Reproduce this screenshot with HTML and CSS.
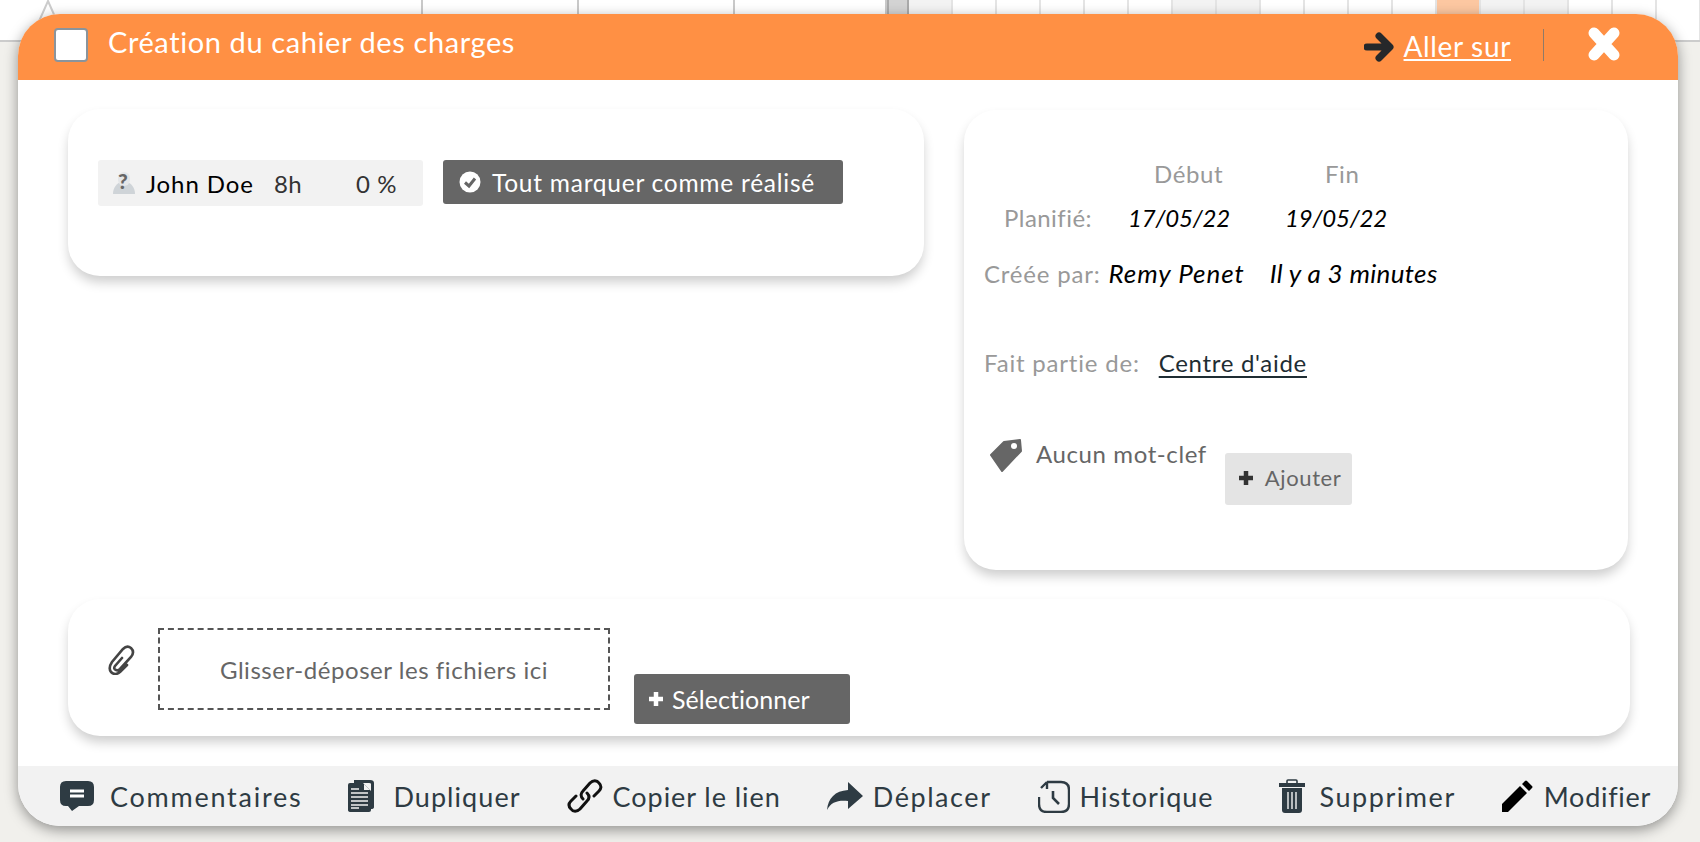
FILE: index.html
```html
<!DOCTYPE html>
<html lang="fr">
<head>
<meta charset="utf-8">
<title>Création du cahier des charges</title>
<link rel="stylesheet" href="styles.css">
</head>
<body>
<div class="gantt">
  <div class="cell c-a"><svg class="milestone" width="30" height="30" viewBox="0 0 30 30"><path d="M15 1 27 28H3Z" fill="#fff" stroke="#ccc" stroke-width="2"/></svg></div>
  <div class="cell c-b"></div><div class="cell c-b"></div><div class="cell c-c"></div>
  <div class="cell c-grey"></div>
  <div class="cell c-d shade"></div>
  <div class="cell c-d"></div><div class="cell c-d"></div><div class="cell c-d"></div><div class="cell c-d"></div><div class="cell c-d"></div>
  <div class="cell c-d shade"></div><div class="cell c-d shade"></div>
  <div class="cell c-d"></div><div class="cell c-d"></div><div class="cell c-d"></div><div class="cell c-d"></div>
  <div class="cell c-d orange"></div>
  <div class="cell c-d shade"></div><div class="cell c-d shade"></div>
  <div class="cell c-d"></div><div class="cell c-d"></div><div class="cell c-d"></div>
</div>

<div class="modal">
  <header class="head">
    <span class="check"></span>
    <span class="title">Création du cahier des charges</span>
    <svg class="go-icon" width="30" height="32" viewBox="0 0 30 32"><path d="M3 16H24M15 5 26 16 15 27" fill="none" stroke="#26282a" stroke-width="7" stroke-linejoin="round" stroke-linecap="round"/></svg>
    <a class="go-link">Aller sur</a>
    <span class="sep"></span>
    <svg class="close" width="34" height="34" viewBox="0 0 34 34"><path d="M7 6 27 28M27 6 7 28" fill="none" stroke="#fff" stroke-width="11" stroke-linecap="round"/></svg>
  </header>

  <div class="top">
    <section class="card left">
      <div class="chip">
        <svg class="avatar" width="22" height="24" viewBox="0 0 22 24"><path d="M0 23C0 16 4 13 7 11H15C18 13 22 16 22 23Z" fill="#cfd4d8"/><rect x="5" y="1" width="12" height="14" rx="6" fill="#e4e6e8"/></svg>
        <span class="q">?</span>
        <span class="name">John Doe</span>
        <span class="hours">8h</span>
        <span class="pct">0 %</span>
      </div>
      <button class="btn-dark mark">
        <svg width="22" height="24" viewBox="0 0 22 24"><circle cx="11" cy="12" r="10.5" fill="#fff"/><path d="M6 12.5 10 16 16 8.5" fill="none" stroke="#666" stroke-width="3"/></svg>
        <span>Tout marquer comme réalisé</span>
      </button>
    </section>

    <section class="card right">
      <div class="dates">
        <span></span><span class="lbl th-start">Début</span><span class="lbl th-end">Fin</span>
        <span class="lbl planned">Planifié:</span><em>17/05/22</em><em>19/05/22</em>
      </div>
      <div class="line created"><span class="lbl">Créée par:</span><em class="who">Remy Penet</em><em class="when">Il y a 3 minutes</em></div>
      <div class="line part"><span class="lbl">Fait partie de:</span><a class="parent">Centre d'aide</a></div>
      <div class="tags">
        <svg class="tag" width="33" height="34" viewBox="0 0 33 34"><path d="M1 16 14 3 30 1 31 12 12 32Z" fill="#666" stroke="#666" stroke-linejoin="round" stroke-width="2"/><circle cx="24" cy="7" r="3" fill="#fff"/></svg>
        <span class="nokw">Aucun mot-clef</span>
        <button class="btn-light">
          <svg width="16" height="16" viewBox="0 0 16 16"><path d="M8 1V15M1 8H15" stroke="#333" stroke-width="4.5"/></svg>
          <span>Ajouter</span>
        </button>
      </div>
    </section>
  </div>

  <section class="card files">
    <svg class="clip" width="28" height="30" viewBox="0 0 28 30"><path d="M14 13 7 21Q5 24 8 25 10 26 12 24L23 12Q27 7 23 3 19 0 15 4L4 17Q0 23 3 27 7 31 12 27L19 20" fill="none" stroke="#444" stroke-width="2.6" stroke-linecap="round"/></svg>
    <div class="drop">Glisser-déposer les fichiers ici</div>
    <button class="btn-dark pick">
      <svg width="16" height="16" viewBox="0 0 16 16"><path d="M8 1V15M1 8H15" stroke="#fff" stroke-width="4.5"/></svg>
      <span>Sélectionner</span>
    </button>
  </section>

  <footer class="foot">
    <div class="act a-com">
      <svg width="36" height="32" viewBox="0 0 36 32"><path d="M7 1H29Q35 1 35 7V20Q35 26 29 26H20L13 31 9 26H7Q1 26 1 20V7Q1 1 7 1Z" fill="#2e3b43"/><path d="M11 11H25M11 16H25" stroke="#fff" stroke-width="3"/></svg>
      <span>Commentaires</span>
    </div>
    <div class="act a-dup">
      <svg width="26" height="34" viewBox="0 0 26 34"><path d="M6 1H22Q26 1 26 4V28Q26 30 23 30V5Q23 4 21 4H6Z" fill="#2e3b43"/><path d="M2 4H15L23 12V31Q23 33 21 33H3Q0 33 0 31V6Q0 4 2 4Z" fill="#2e3b43"/><path d="M16 5 22 11H16Z" fill="#f2f2f2"/><path d="M3 10H11M3 14H20M3 18H20M3 22H20M3 26H20M3 29H11" stroke="#f2f2f2" stroke-width="1.6"/></svg>
      <span>Dupliquer</span>
    </div>
    <div class="act a-link">
      <svg width="36" height="36" viewBox="0 0 36 36"><path d="M16 21C13 18 14 15 16 13L23 5C26 2 30 2 32 5C35 8 34 11 32 13L27 18M20 15C23 18 22 21 20 23L13 31C10 34 6 34 4 31C1 28 2 25 4 23L9 18" fill="none" stroke="#111" stroke-width="3" stroke-linecap="round"/></svg>
      <span>Copier le lien</span>
    </div>
    <div class="act a-move">
      <svg width="36" height="28" viewBox="0 0 36 28"><path d="M0 28C1 16 8 9 21 8V0L36 14 21 27V19C11 18 4 20 0 28Z" fill="#2e3b43"/></svg>
      <span>Déplacer</span>
    </div>
    <div class="act a-hist">
      <svg width="32" height="33" viewBox="0 0 32 33"><path d="M9 2H23Q31 2 31 10V24Q31 32 23 32H9Q1 32 1 24V17M3 8 9 2M9 2V9" fill="none" stroke="#2e3b43" stroke-width="2.4"/><path d="M15 11V18L21 24" fill="none" stroke="#2e3b43" stroke-width="2.6"/></svg>
      <span>Historique</span>
    </div>
    <div class="act a-del">
      <svg width="26" height="34" viewBox="0 0 26 34"><path d="M8 4V2Q8 1 9 1H17Q18 1 18 2V4" fill="none" stroke="#2e3b43" stroke-width="1.6"/><path d="M0 4H26V8H0Z" fill="#2e3b43"/><path d="M3 9H23V31Q23 34 20 34H6Q3 34 3 31Z" fill="#2e3b43"/><path d="M9 13V30M13 13V30M17 13V30" stroke="#f2f2f2" stroke-width="1.4"/></svg>
      <span>Supprimer</span>
    </div>
    <div class="act a-edit">
      <svg width="31" height="32" viewBox="0 0 31 32"><path d="M0 32V24L18 6 25 13 7 31 6 32ZM20 4 23 1Q24 0 25 1L30 6Q31 7 30 8L27 11Z" fill="#000"/></svg>
      <span>Modifier</span>
    </div>
  </footer>
</div>
</body>
</html>
```

FILE: styles.css
```css
* { box-sizing: border-box; }
html, body { margin: 0; height: 842px; overflow: hidden; }
body {
  background: #f1f0ec;
  font-family: "Lato", "Open Sans", sans-serif;
  position: relative;
}
.gantt {
  display: flex;
  height: 42px;
  background: #fff;
  border-bottom: 2px solid #ccc;
}
.cell { height: 100%; border-right: 2px solid #e4e4e4; flex: none; }
.c-a { width: 423px; border-color: #c9c9c9; padding-left: 33px; }
.c-b { width: 156px; border-color: #c9c9c9; }
.c-c { width: 152px; border-color: #c9c9c9; }
.c-grey { width: 22px; background: #d3d3d3; border-left: 2px solid #aaa; border-right-color: #aaa; }
.c-d { width: 44px; }
.shade { background: #f3f3f3; }
.orange { background: #fcc7a1; }
.milestone { display: block; }

.modal {
  position: absolute;
  left: 18px;
  top: 14px;
  width: 1660px;
  height: 812px;
  background: #fff;
  border-radius: 42px;
  overflow: hidden;
  display: flex;
  flex-direction: column;
  box-shadow: 0 4px 14px rgba(0, 0, 0, .4);
}
.head {
  height: 66px;
  flex: none;
  background: #ff9044;
  display: flex;
  align-items: center;
  padding: 0 57px 0 36px;
  color: #fff;
}
.check {
  width: 34px;
  height: 34px;
  background: #fff;
  border: 2px solid #8a949c;
  border-radius: 4px;
  margin: -4px 20px 0 0;
}
.title { font-size: 29px; letter-spacing: .6px; flex: 1; margin-top: -11px; }
.go-icon { margin: 0 10px 0 0; }
.go-link { font-size: 28px; letter-spacing: .65px; text-decoration: underline; text-underline-offset: 2px; margin: -3px 32px 0 0; }
.sep { width: 1px; height: 32px; background: #8f7a68; margin: -4px 43px 0 0; }
.close { margin-top: -6px; }

.top { display: flex; align-items: flex-start; padding: 29px 0 0 50px; gap: 40px; }
.card {
  background: #fff;
  border-radius: 32px;
  box-shadow: 0 7px 12px -1px rgba(0, 0, 0, .2);
}
.left {
  width: 856px;
  height: 167px;
  padding: 51px 0 0 30px;
  display: flex;
  align-items: flex-start;
  gap: 20px;
}
.chip {
  width: 325px;
  height: 46px;
  background: #f2f2f2;
  border-radius: 3px;
  display: flex;
  align-items: center;
  padding-left: 15px;
  font-size: 24px;
  position: relative;
}
.avatar { margin-right: 11px; }
.q {
  position: absolute;
  left: 20px;
  top: 9px;
  font-size: 21px;
  line-height: 24px;
  font-weight: 900;
  color: #666;
}
.name { color: #000; width: 128px; letter-spacing: .9px; }
.hours { color: #333; width: 82px; letter-spacing: .4px; }
.pct { color: #333; letter-spacing: .6px; }
button { font-family: inherit; border: 0; padding: 0; cursor: pointer; }
.btn-dark {
  background: #666;
  color: #fff;
  border-radius: 3px;
  display: flex;
  align-items: center;
}
.mark { width: 400px; height: 44px; padding-left: 16px; gap: 11px; font-size: 24.5px; letter-spacing: .75px; }

.right {
  width: 664px;
  height: 460px;
  margin-top: 1px;
  padding: 50px 0 0 20px;
  font-size: 24px;
  letter-spacing: .6px;
}
.lbl { color: #999; }
em { color: #000; font-style: italic; }
.dates {
  display: grid;
  grid-template-columns: 144px 157px auto;
  grid-template-rows: 26px 26px;
  row-gap: 18px;
  align-items: center;
}
.dates em { letter-spacing: -.2px; }
.th-start { margin-left: 26px; }
.th-end { margin-left: 40px; }
.planned { margin-left: 20px; letter-spacing: .45px; }
.line { display: flex; align-items: baseline; }
.line .lbl { letter-spacing: .8px; }
.created { margin-top: 27px; height: 31px; }
.who { margin-left: 8px; font-size: 26px; letter-spacing: .95px; }
.when { margin-left: 25px; font-size: 26px; letter-spacing: .35px; }
.part { margin-top: 60px; height: 30px; }
.parent { margin-left: 19px; color: #1f2d33; text-decoration: underline; text-underline-offset: 4px; letter-spacing: .7px; }
.tags { display: flex; align-items: flex-start; margin-top: 61px; padding-left: 6px; }
.tag { flex: none; }
.nokw { color: #666; margin-left: 13px; line-height: 30px; }
.btn-light {
  width: 127px;
  height: 52px;
  background: #e4e4e4;
  color: #666;
  border-radius: 3px;
  margin: 14px 0 0 18px;
  padding: 0 0 3px 13px;
  display: flex;
  align-items: center;
  gap: 11px;
  font-size: 22px;
  letter-spacing: .6px;
}

.files {
  margin: 29px 0 0 50px;
  width: 1562px;
  height: 137px;
  padding: 29px 0 0 40px;
  display: flex;
  align-items: flex-start;
}
.clip { margin: 17px 22px 0 0; flex: none; }
.drop {
  width: 452px;
  height: 82px;
  border: 2px dashed #555;
  display: flex;
  align-items: center;
  justify-content: center;
  color: #666;
  font-size: 24px;
  letter-spacing: .55px;
}
.pick {
  width: 216px;
  height: 50px;
  margin: 46px 0 0 24px;
  padding-left: 14px;
  gap: 8px;
  font-size: 25px;
  letter-spacing: .05px;
}

.foot {
  margin-top: auto;
  height: 60px;
  flex: none;
  background: #f2f2f2;
  display: flex;
  align-items: center;
  padding-left: 41px;
  gap: 46px;
  color: #2e3b43;
  font-size: 27px;
}
.act { display: flex; align-items: center; gap: 14px; flex: none; }
.a-com { gap: 15px; letter-spacing: 1.75px; }
.a-dup { gap: 19px; letter-spacing: 1.06px; }
.a-link { gap: 10px; letter-spacing: .95px; }
.a-move { gap: 10px; letter-spacing: 1.57px; }
.a-hist { gap: 10px; margin-right: 19px; letter-spacing: .98px; }
.a-del { gap: 15px; letter-spacing: 1.54px; }
.a-edit { gap: 11px; letter-spacing: .7px; }
```
